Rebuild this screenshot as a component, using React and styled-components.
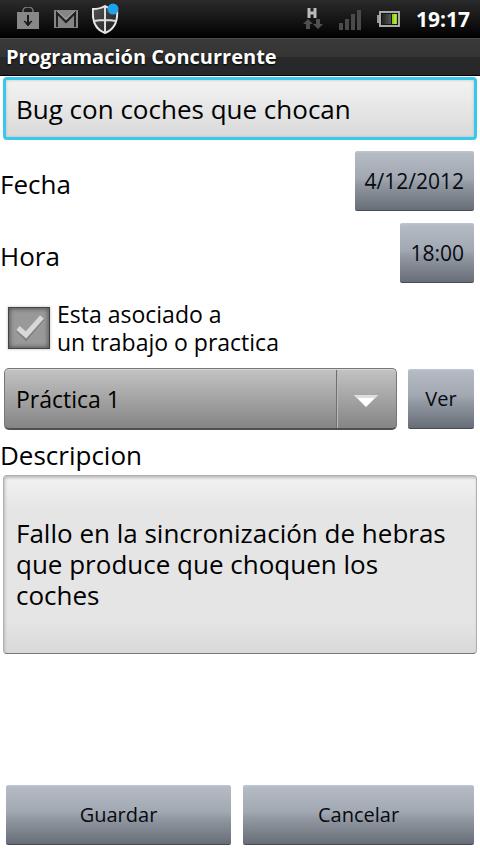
import React, { useState } from "react";
import styled, { createGlobalStyle } from "styled-components";

const GlobalStyle = createGlobalStyle`
  * {
    box-sizing: border-box;
  }
  body {
    margin: 0;
    background: #fff;
    color: #000;
    font-family: "Open Sans", "Noto Sans", sans-serif;
  }
  button, input, select, textarea {
    margin: 0;
    font-family: inherit;
    color: inherit;
  }
`;

const Screen = styled.div`
  display: flex;
  flex-direction: column;
  min-height: 100vh;
`;

const StatusBar = styled.header`
  display: flex;
  align-items: center;
  justify-content: space-between;
  height: 38px;
  padding: 0 10px 0 16px;
  background: linear-gradient(#2b2b2b, #0b0b0b 75%, #000);
  color: #fff;
`;

const StatusGroup = styled.div`
  display: flex;
  align-items: center;
  gap: ${props => props.$gap};
  svg {
    display: block;
  }
`;

const Clock = styled.time`
  font-size: 21px;
  line-height: 28px;
  font-weight: 700;
`;

const TitleBar = styled.h1`
  height: 38px;
  margin: 0;
  padding: 0 6px;
  border-top: 1px solid #4c4c4c;
  border-bottom: 1px solid #000;
  background: linear-gradient(#3a3a3a, #343434 50%, #29292a 51%, #27272a);
  color: #fff;
  font-size: 20px;
  line-height: 35px;
  font-weight: 700;
  text-shadow: 0 1px 2px #000;
`;

const Form = styled.form`
  display: flex;
  flex: 1;
  flex-direction: column;
`;

const TitleInput = styled.input`
  height: 63px;
  margin: 1px 3px 5px;
  padding: 0 10px;
  border: 3px solid #38c8ee;
  border-radius: 4px;
  outline: none;
  background: linear-gradient(#f3f3f3, #d9d9d9);
  box-shadow: inset 0 0 3px #bbb;
  font-size: 26px;
  line-height: 36px;
`;

const FieldRow = styled.div`
  display: flex;
  align-items: center;
  justify-content: space-between;
  height: 72px;
  padding-right: 6px;
`;

const Label = styled.label`
  padding-top: 6px;
  font-size: 26px;
  line-height: 36px;
`;

const Button = styled.button`
  height: 60px;
  padding: 0 10px;
  border: 0;
  border-bottom: 1px solid #474c54;
  border-radius: 2px;
  background: linear-gradient(#c2c8d1, #b5bbc5 4%, #a2a8b1 46%, #9399a2 56%, #686e78);
  color: #060a12;
  font-size: 20px;
  line-height: 28px;
`;

const PickerButton = styled(Button)`
  font-size: 21px;
`;

const CheckRow = styled.label`
  display: flex;
  align-items: center;
  gap: 7px;
  height: 78px;
  padding-left: 8px;
  font-size: 23px;
  line-height: 28px;
  white-space: pre-line;
`;

const CheckBox = styled.span`
  display: grid;
  width: 42px;
  height: 42px;
  > * {
    grid-area: 1 / 1;
  }
  svg {
    pointer-events: none;
  }
`;

const CheckInput = styled.input`
  appearance: none;
  width: 42px;
  height: 42px;
  border: 1px solid #444;
  background: #999;
  box-shadow: inset 0 0 4px 1px #555, 0 0 2px 1px #ddd;
  & + svg {
    visibility: hidden;
  }
  &:checked + svg {
    visibility: visible;
  }
`;

const SelectRow = styled.div`
  display: flex;
  align-items: center;
  gap: 11px;
  height: 64px;
  padding: 0 6px 0 4px;
`;

const Spinner = styled.div`
  display: grid;
  flex: 1;
  grid-template-columns: 1fr 61px;
  height: 62px;
`;

const Select = styled.select`
  grid-area: 1 / 1 / 2 / 3;
  appearance: none;
  padding: 0 70px 0 11px;
  border: 1px solid #777;
  border-bottom: 2px solid #505050;
  border-radius: 5px;
  background: linear-gradient(#c3c3c3, #858585);
  box-shadow: inset 0 1px #d8d8d8;
  font-size: 23px;
  line-height: 32px;
`;

const SpinnerArrow = styled.span`
  grid-area: 1 / 2;
  display: flex;
  align-items: center;
  justify-content: center;
  margin: 2px 2px 2px 0;
  padding-top: 2px;
  border-left: 1px solid #707070;
  box-shadow: inset 1px 0 #b9b9b9;
  pointer-events: none;
`;

const ViewButton = styled(Button)`
  width: 66px;
`;

const DescriptionLabel = styled(Label)`
  height: 44px;
`;

const Description = styled.textarea`
  height: 179px;
  margin: 0 3px;
  padding: 42px 12px 0;
  border: 1px solid #b0b0b0;
  border-bottom-color: #777;
  border-radius: 4px;
  outline: none;
  resize: none;
  overflow: hidden;
  background: linear-gradient(#f2f2f2, #e5e5e5 20%, #e5e5e5 82%, #d9d9d9);
  box-shadow: inset 1px 2px 3px #bbb;
  font-size: 26px;
  line-height: 31px;
`;

const Actions = styled.footer`
  display: grid;
  grid-template-columns: 225fr 231fr;
  gap: 12px;
  margin-top: auto;
  padding: 12px 6px 9px;
`;

const MarketIcon = () => (
  <svg width="24" height="24" viewBox="0 0 24 24" aria-hidden="true">
    <path d="M7 6V4a5 4 0 0 1 10 0v2" fill="none" stroke="#777" strokeWidth="1.5" />
    <path d="M1 5h22v17H1z" fill="#888" />
    <path d="M12 8v8" fill="none" stroke="#1a1a1a" strokeWidth="2" />
    <path d="M8 14l4 2 4-2-4 5z" fill="#1a1a1a" stroke="#1a1a1a" />
  </svg>
);

const MailIcon = () => (
  <svg width="24" height="18" viewBox="0 0 24 18" aria-hidden="true">
    <path d="M0 0h24v18H0z" fill="#858585" />
    <path d="M3 17V3l9 9 9-9v14" fill="none" stroke="#202020" strokeWidth="2" />
    <path d="M3 1l9 8 9-8" fill="none" stroke="#a5a5a5" strokeWidth="1" />
  </svg>
);

const ShieldIcon = () => (
  <svg width="28" height="32" viewBox="0 0 28 32" aria-hidden="true">
    <defs>
      <linearGradient id="shield" x1="0" y1="0" x2="1" y2="1">
        <stop offset="0" stopColor="#555" />
        <stop offset="1" stopColor="#1c1c1c" />
      </linearGradient>
    </defs>
    <path
      d="M1 6Q8 6 13 3q5 3 12 3c1 11-1 20-12 24C2 26 0 17 1 6z"
      fill="url(#shield)"
      stroke="#e8e8e8"
      strokeWidth="2"
    />
    <path d="M13 4v26M2 18q11-2 22 0" fill="none" stroke="#ddd" strokeWidth="2" />
    <circle cx="21" cy="6" r="5.500" fill="#1ea2ec" />
  </svg>
);

const DataIcon = () => (
  <svg width="20" height="24" viewBox="0 0 20 24" aria-hidden="true">
    <path d="M6 1v10M12 1v10M6 6h6" fill="none" stroke="#bbb" strokeWidth="3" />
    <path d="M5 12l5 5H7v5H3v-5H0zM13 12h4v5h3l-5 5-5-5h3z" fill="#505050" />
  </svg>
);

const SignalIcon = () => (
  <svg width="24" height="22" viewBox="0 0 24 22" aria-hidden="true">
    <path d="M1 15h4v7H1zM7 11h4v11H7zM13 6h4v16h-4zM19 2h4v20h-4z" fill="#4a4a4a" />
  </svg>
);

const BatteryIcon = () => (
  <svg width="24" height="18" viewBox="0 0 24 18" aria-hidden="true">
    <defs>
      <linearGradient id="battery">
        <stop offset="0" stopColor="#222" />
        <stop offset="1" stopColor="#555" />
      </linearGradient>
    </defs>
    <path d="M0 5h3v8H0z" fill="#999" />
    <path d="M3 2h19v14H3z" fill="#151515" stroke="#aaa" strokeWidth="2" />
    <path d="M5 4h9v10H5z" fill="url(#battery)" />
    <path d="M15 4h5v10h-5z" fill="#8fd414" />
    <path d="M18 4v10" stroke="#d5f56b" />
  </svg>
);

const CheckMark = () => (
  <svg width="42" height="42" viewBox="0 0 42 42" aria-hidden="true">
    <path d="M10 22l8 8 16-19" fill="none" stroke="#808080" strokeWidth="6" />
    <path d="M10 21l8 7 16-18" fill="none" stroke="#d8d8d8" strokeWidth="5" />
  </svg>
);

const ArrowDown = () => (
  <svg width="24" height="13" viewBox="0 0 24 13" aria-hidden="true">
    <path d="M0 1h24L12 13z" fill="#fff" />
    <path d="M0 1h24l-3 3H3z" fill="#dedede" />
  </svg>
);

export default function App() {
  const [title, setTitle] = useState("Bug con coches que chocan");
  const [linked, setLinked] = useState(true);
  const [description, setDescription] = useState(
    "Fallo en la sincronización de hebras que produce que choquen los coches"
  );

  return (
    <Screen>
      <GlobalStyle />
      <StatusBar>
        <StatusGroup $gap="14px">
          <MarketIcon />
          <MailIcon />
          <ShieldIcon />
        </StatusGroup>
        <StatusGroup $gap="15px">
          <DataIcon />
          <SignalIcon />
          <BatteryIcon />
          <Clock>19:17</Clock>
        </StatusGroup>
      </StatusBar>
      <TitleBar>Programación Concurrente</TitleBar>
      <Form onSubmit={e => e.preventDefault()}>
        <TitleInput
          aria-label="Titulo"
          value={title}
          onChange={e => setTitle(e.target.value)}
        />
        <FieldRow>
          <Label htmlFor="fecha">Fecha</Label>
          <PickerButton id="fecha" type="button">4/12/2012</PickerButton>
        </FieldRow>
        <FieldRow>
          <Label htmlFor="hora">Hora</Label>
          <PickerButton id="hora" type="button">18:00</PickerButton>
        </FieldRow>
        <CheckRow>
          <CheckBox>
            <CheckInput
              type="checkbox"
              checked={linked}
              onChange={e => setLinked(e.target.checked)}
            />
            <CheckMark />
          </CheckBox>
          <span>{"Esta asociado a\nun trabajo o practica"}</span>
        </CheckRow>
        <SelectRow>
          <Spinner>
            <Select aria-label="Trabajo o practica">
              <option>Práctica 1</option>
            </Select>
            <SpinnerArrow>
              <ArrowDown />
            </SpinnerArrow>
          </Spinner>
          <ViewButton type="button">Ver</ViewButton>
        </SelectRow>
        <DescriptionLabel htmlFor="descripcion">Descripcion</DescriptionLabel>
        <Description
          id="descripcion"
          spellCheck={false}
          value={description}
          onChange={e => setDescription(e.target.value)}
        />
        <Actions>
          <Button type="submit">Guardar</Button>
          <Button type="button">Cancelar</Button>
        </Actions>
      </Form>
    </Screen>
  );
}
